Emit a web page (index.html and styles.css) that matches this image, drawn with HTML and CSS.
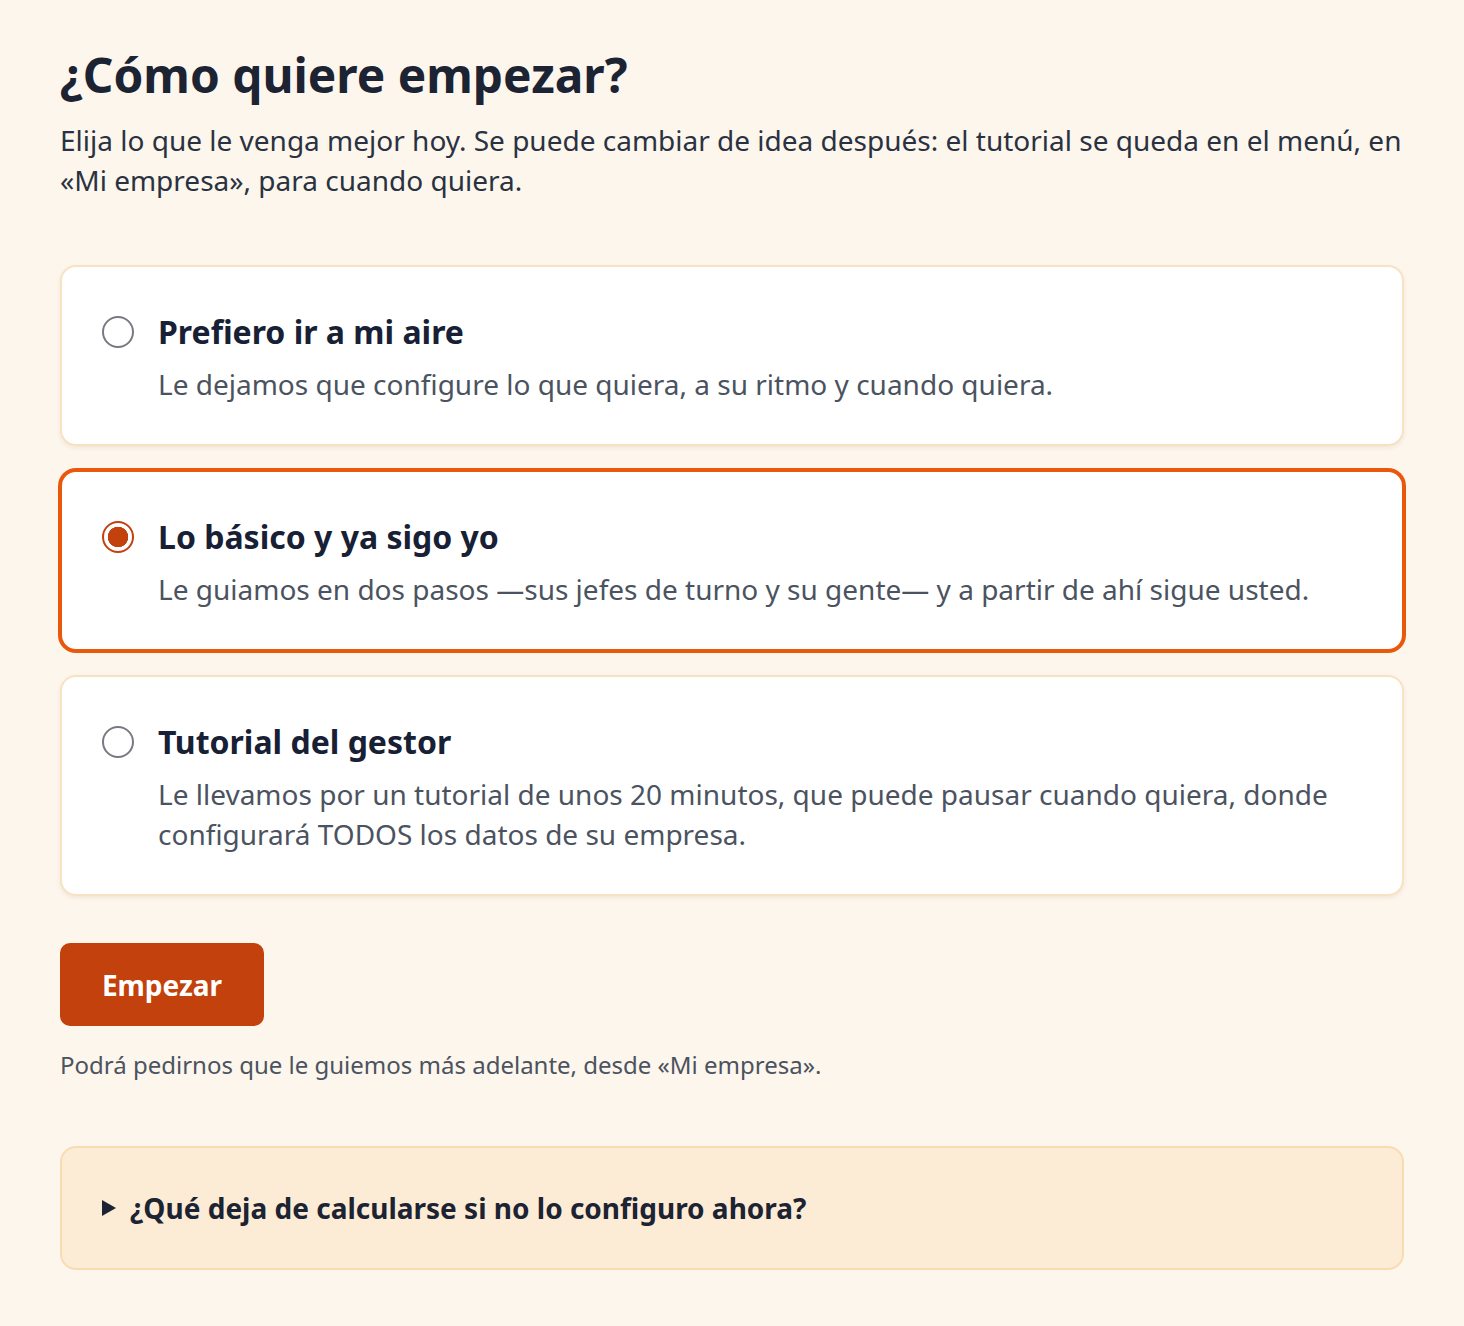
FILE: index.html
```html
<!DOCTYPE html>
<html lang="es">
<head>
<meta charset="utf-8">
<title>¿Cómo quiere empezar?</title>
<link rel="stylesheet" href="styles.css">
</head>
<body>
<main class="page">
  <h1 class="title">¿Cómo quiere empezar?</h1>
  <p class="intro">Elija lo que le venga mejor hoy. Se puede cambiar de idea después: el tutorial se queda en el menú, en «Mi empresa», para cuando quiera.</p>

  <div class="options">
    <label class="option">
      <span class="radio"></span>
      <span class="option-body">
        <span class="option-title">Prefiero ir a mi aire</span>
        <span class="option-desc">Le dejamos que configure lo que quiera, a su ritmo y cuando quiera.</span>
      </span>
    </label>
    <label class="option selected">
      <span class="radio checked"></span>
      <span class="option-body">
        <span class="option-title">Lo básico y ya sigo yo</span>
        <span class="option-desc">Le guiamos en dos pasos —sus jefes de turno y su gente— y a partir de ahí sigue usted.</span>
      </span>
    </label>
    <label class="option">
      <span class="radio"></span>
      <span class="option-body">
        <span class="option-title">Tutorial del gestor</span>
        <span class="option-desc">Le llevamos por un tutorial de unos 20 minutos, que puede pausar cuando quiera, donde configurará TODOS los datos de su empresa.</span>
      </span>
    </label>
  </div>

  <button class="start" type="button">Empezar</button>
  <p class="note">Podrá pedirnos que le guiemos más adelante, desde «Mi empresa».</p>

  <details class="faq">
    <summary class="faq-summary"><span class="caret"></span>¿Qué deja de calcularse si no lo configuro ahora?</summary>
  </details>
</main>
</body>
</html>
```
FILE: styles.css
```css
* { box-sizing: border-box; }

html, body {
  margin: 0;
  padding: 0;
  background: #fdf6ec;
}

body {
  font-family: "Noto Sans", "Open Sans", sans-serif;
  color: #1e2636;
}

.page {
  padding: 47px 60px 56px;
}

.title {
  margin: 0;
  font-size: 47.8px;
  line-height: 56px;
  font-weight: 700;
  color: #1c2333;
}

.intro {
  margin: 17px 0 0;
  font-size: 28px;
  line-height: 40px;
  color: #2a3242;
}

.options {
  margin-top: 65px;
  display: flex;
  flex-direction: column;
  gap: 24px;
}

.option {
  display: flex;
  align-items: flex-start;
  gap: 24px;
  background: #ffffff;
  border: 2px solid #f8e2c4;
  border-radius: 16px;
  padding: 45px 40px 40px;
  box-shadow: 0 2px 4px rgba(160, 120, 70, 0.12);
  cursor: pointer;
}

.option.selected {
  border-color: #ea580c;
  box-shadow: 0 0 0 2px #ea580c;
}

.radio {
  flex: none;
  width: 32px;
  height: 32px;
  margin-top: 4px;
  border-radius: 50%;
  border: 2px solid #777a80;
  background: #fff;
}

.radio.checked {
  border-color: #c2410c;
  background: radial-gradient(circle, #c2410c 0 10px, #fff 10.5px);
}

.option-body {
  display: flex;
  flex-direction: column;
  gap: 12px;
}

.option-title {
  font-size: 32px;
  line-height: 40px;
  font-weight: 700;
  color: #172034;
}

.option-desc {
  font-size: 28px;
  line-height: 40px;
  color: #4b5360;
}

.start {
  display: block;
  margin-top: 47px;
  width: 204px;
  height: 83px;
  border: none;
  border-radius: 10px;
  background: #c2410c;
  color: #fff;
  font-family: inherit;
  font-size: 28px;
  font-weight: 700;
  cursor: pointer;
}

.note {
  margin: 21px 0 0;
  font-size: 24px;
  line-height: 36px;
  color: #4b5360;
}

.faq {
  margin-top: 63px;
  background: #fdecd5;
  border: 2px solid #f9dbb0;
  border-radius: 16px;
  padding: 40px 40px;
}

.faq-summary {
  list-style: none;
  display: flex;
  align-items: center;
  gap: 14px;
  font-size: 28px;
  line-height: 40px;
  font-weight: 700;
  color: #1c2333;
  cursor: pointer;
}

.faq-summary::-webkit-details-marker { display: none; }

.caret {
  width: 0;
  height: 0;
  border-top: 8px solid transparent;
  border-bottom: 8px solid transparent;
  border-left: 14px solid #1c2333;
}
```
